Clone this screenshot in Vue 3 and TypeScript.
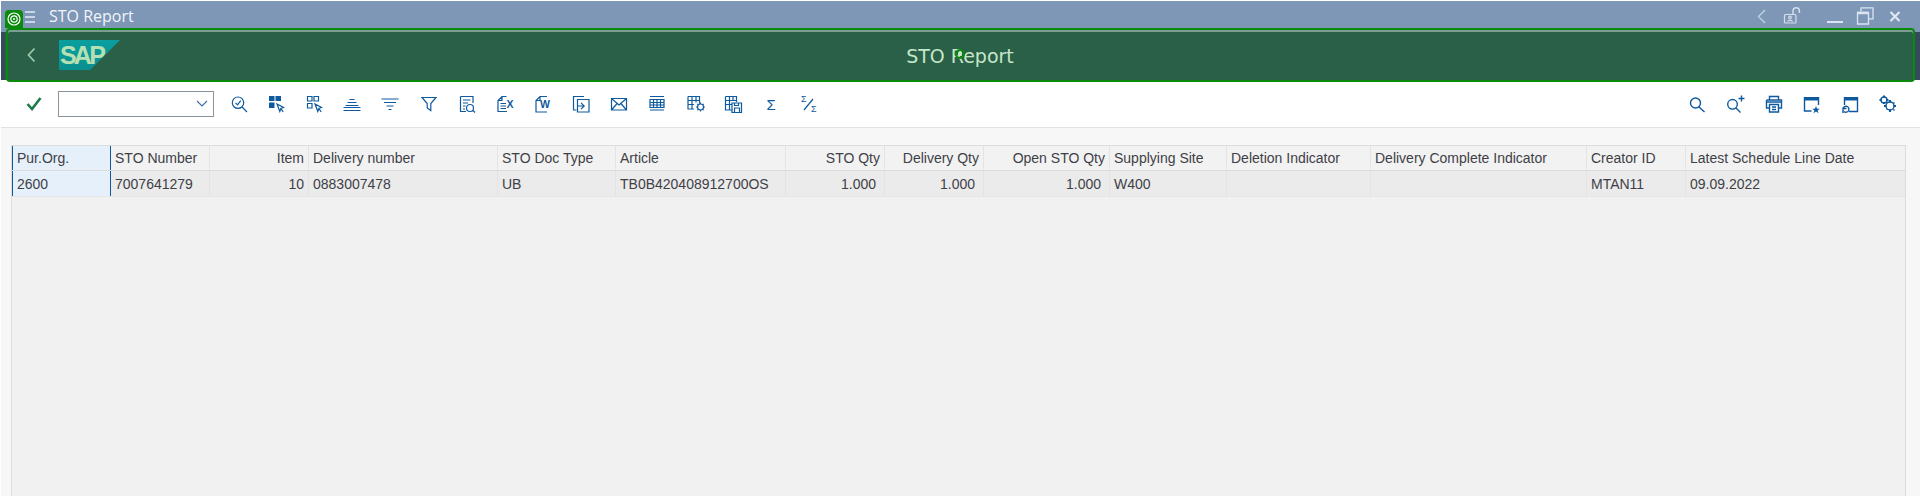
<template>
  <div class="app">
    <div class="title-bar">
      <svg class="menu-icon" width="10" height="12" viewBox="0 0 10 12">
        <path d="M0 1h10M0 6h10M0 11h10" stroke="#e3ebf5" stroke-width="1.5" />
      </svg>
      <span class="window-title">STO Report</span>
      <div class="window-btns">
        <svg width="30" height="24" viewBox="0 0 30 24" fill="none">
          <path d="M18 5l-6.500 6.500L18 18" stroke="#c3d2e4" stroke-width="1.300" />
        </svg>
        <svg width="30" height="24" viewBox="0 0 30 24" fill="none" stroke="#d3dfec" stroke-width="1.200">
          <rect x="7.500" y="9.500" width="11.500" height="8.500" rx="1" />
          <path d="M16 9.500V6a3.200 3.200 0 0 1 6.400 0v2" stroke-width="1.500" />
          <circle cx="13" cy="12.500" r="1.300" />
          <path d="M10.500 16.500c.5-1.600 4.500-1.600 5 0" />
        </svg>
        <svg class="gap-btn" width="30" height="24" viewBox="0 0 30 24" fill="none">
          <path d="M7 17h16" stroke="#dbe5f1" stroke-width="2" />
        </svg>
        <svg width="30" height="24" viewBox="0 0 30 24" fill="none" stroke="#dbe5f1" stroke-width="1.300">
          <path d="M7.500 7.500h11v11.500h-11z" />
          <path d="M11 6.500V2.800h12v11h-4" />
          <path d="M7.500 8h11" stroke-width="2.500" />
        </svg>
        <svg width="30" height="24" viewBox="0 0 30 24" fill="none">
          <path d="M10.500 7l9 9M19.500 7l-9 9" stroke="#e3ebf5" stroke-width="2" />
        </svg>
      </div>
    </div>

    <header class="shell-header">
      <div class="shell-inner">
        <svg class="back-icon" width="12" height="16" viewBox="0 0 12 16" fill="none">
          <path d="M8.500 1.500L2.500 8l6 6.500" stroke="#9fc7a5" stroke-width="1.800" />
        </svg>
        <div class="sap-logo"><span>SAP</span></div>
        <h1 class="page-title">STO Report</h1>
      </div>
      <div class="focus-frame"></div>
      <div class="focus-badge">
        <svg width="14" height="14" viewBox="0 0 14 14" fill="none" stroke="#fff">
          <circle cx="7" cy="7" r="6" stroke-width="1.200" />
          <circle cx="7" cy="7" r="3.200" stroke-width="1.200" />
          <circle cx="7" cy="7" r="1" fill="#fff" stroke="none" />
        </svg>
      </div>
      <div class="cursor-ring"></div>
    </header>

    <div class="toolbar">
      <svg class="ok-icon" width="18" height="16" viewBox="0 0 18 16" fill="none">
        <path d="M2.500 8l4.500 5L15.500 2" stroke="#1f7a4a" stroke-width="2.600" />
      </svg>
      <div class="command-box">
        <svg width="12" height="7" viewBox="0 0 12 7" fill="none">
          <path d="M1 1l5 5 5-5" stroke="#3a6ea5" stroke-width="1.100" />
        </svg>
      </div>
      <div class="tool-group">
        <button v-for="icon in leftIcons" :key="icon.name" class="tool-btn" :title="icon.name">
          <svg width="24" height="24" viewBox="0 0 24 24" fill="none">
            <path v-if="icon.solid" :d="icon.solid" fill="#0f5a9e" />
            <path v-if="icon.line" :d="icon.line" stroke="#0f5a9e" stroke-width="1.200" />
            <text v-for="t in icon.labels" :key="t.x" :x="t.x" :y="t.y" :font-size="t.size" :class="t.bold ? 'icon-label bold' : 'icon-label'">{{ t.text }}</text>
          </svg>
        </button>
      </div>
      <div class="tool-group right">
        <button v-for="icon in rightIcons" :key="icon.name" class="tool-btn" :title="icon.name">
          <svg width="24" height="24" viewBox="0 0 24 24" fill="none">
            <path v-if="icon.solid" :d="icon.solid" fill="#0f5a9e" />
            <path v-if="icon.line" :d="icon.line" stroke="#0f5a9e" stroke-width="1.400" />
          </svg>
        </button>
      </div>
    </div>

    <main class="content">
      <div class="table-panel">
        <div class="grid-row head">
          <div v-for="(col, i) in columns" :key="col.key" class="cell" :class="{ num: col.num, key: i === 0 }">
            {{ col.label }}
          </div>
        </div>
        <div v-for="row in rows" :key="row.ebeln" class="grid-row body">
          <div v-for="(col, i) in columns" :key="col.key" class="cell" :class="{ num: col.num, qty: col.qty, key: i === 0 }">
            {{ row[col.key] }}
          </div>
        </div>
      </div>
    </main>
  </div>
</template>

<script setup lang="ts">
interface Column {
  key: string
  label: string
  num?: boolean
  qty?: boolean
}

interface IconLabel {
  text: string
  x: number
  y: number
  size: number
  bold?: boolean
}

interface ToolIcon {
  name: string
  line?: string
  solid?: string
  labels?: IconLabel[]
}

const columns: Column[] = [
  { key: 'ekorg', label: 'Pur.Org.' },
  { key: 'ebeln', label: 'STO Number' },
  { key: 'ebelp', label: 'Item', num: true },
  { key: 'vbeln', label: 'Delivery number' },
  { key: 'bsart', label: 'STO Doc Type' },
  { key: 'matnr', label: 'Article' },
  { key: 'menge', label: 'STO Qty', num: true, qty: true },
  { key: 'lfimg', label: 'Delivery Qty', num: true, qty: true },
  { key: 'open', label: 'Open STO Qty', num: true, qty: true },
  { key: 'reswk', label: 'Supplying Site' },
  { key: 'loekz', label: 'Deletion Indicator' },
  { key: 'elikz', label: 'Delivery Complete Indicator' },
  { key: 'ernam', label: 'Creator ID' },
  { key: 'eindt', label: 'Latest Schedule Line Date' },
]

const rows: Record<string, string>[] = [
  {
    ekorg: '2600',
    ebeln: '7007641279',
    ebelp: '10',
    vbeln: '0883007478',
    bsart: 'UB',
    matnr: 'TB0B420408912700OS',
    menge: '1.000',
    lfimg: '1.000',
    open: '1.000',
    reswk: 'W400',
    loekz: '',
    elikz: '',
    ernam: 'MTAN11',
    eindt: '09.09.2022',
  },
]

const cursor = 'M13 12l6.500 3.500-2.700 1-1 3zM16.800 16.500l2.400 3.300'

const leftIcons: ToolIcon[] = [
  { name: 'Find check', line: 'M12 5a5.700 5.700 0 1 0 0 11.400a5.700 5.700 0 1 0 0-11.400M16 15l5 5M9.500 10.800l2 2 3.200-4.200' },
  { name: 'Select all', solid: 'M5 4h5.500v5H5zM11.500 4H17v5h-5.500zM5 10.500h5.500V16H5z', line: cursor },
  { name: 'Deselect all', line: 'M5.500 4.500H10v4.500H5.500zM12 4.500h4.500v4.500H12zM5.500 11.500H10V16H5.500z' + cursor },
  { name: 'Sort ascending', line: 'M9.500 7.500h5M7.500 10.500h9M5.500 13.500h13M3.500 15.500h17M3.500 18.500h17' },
  { name: 'Sort descending', line: 'M3.500 7h17M6 10.500h12M8.500 14h7M10.500 17.500h3' },
  { name: 'Filter', line: 'M5 5.500h14l-5.200 6v7l-3.600-2.500v-4.500z' },
  { name: 'Report', line: 'M5.500 4.500H18v6.500M5.500 4.500V19.500H11M8 8h7.500M8 11h5M8 14h2.500M8 17h2M15 12.500a3.500 3.500 0 1 0 0 7a3.500 3.500 0 1 0 0-7M17.500 18l2.500 2.500' },
  {
    name: 'Excel',
    line: 'M13.500 4.500H9L5 8.500V19.500h9M9 4.500V8.500H5M7.500 11.500H13M7.500 14H13M7.500 16.500H13',
    labels: [{ text: 'X', x: 13.500, y: 15.500, size: 10.500, bold: true }],
  },
  {
    name: 'Word',
    line: 'M16 4.500H9L5 8.500V20H16M9 4.500V8.500H5',
    labels: [{ text: 'W', x: 9, y: 16, size: 10.500, bold: true }],
  },
  { name: 'Export', line: 'M15 4.500H4.500V18H7.500M8.500 7.500H20V20H8.500zM8.500 14H15M12 10.800l3.200 3.200-3.200 3.200' },
  { name: 'Mail', line: 'M4.500 6.500h15v11.500h-15zM4.500 6.500l7.500 6.500 7.500-6.500M4.500 18l6-7M19.500 18l-6-7' },
  { name: 'Layout', line: 'M5 4.500h14M5 18h14M5 7.500h14v8H5zM5 10.500h14M5 13h14M8.500 7.500v8M12 7.500v8M15.500 7.500v8' },
  {
    name: 'Change layout',
    line: 'M5 4.500h11.500v7M5 4.500V17h6M5 8.500h11.500M5 12.500h6M9 4.500V17M13 4.500v6M17.500 12a3 3 0 1 0 0 6a3 3 0 1 0 0-6M17.500 10.500v1.500M17.500 18v1.500M14.500 15h-1.500M20.500 15h1.500M15.300 12.800l-1-1M19.700 17.200l1 1M19.700 12.800l1-1M15.300 17.200l-1 1',
  },
  {
    name: 'Save layout',
    line: 'M4.500 4.500h11v5.500M4.500 4.500V18h6M4.500 8.500h11M4.500 12.500h6M8.500 4.500V18M12 4.500v4M11 11h9.500v9.500H11zM13.500 20.500v-4.500h5v4.500M13.500 11v2.500h4V11',
  },
  { name: 'Sum', labels: [{ text: 'Σ', x: 7.500, y: 17.500, size: 15 }] },
  {
    name: 'Subtotal',
    line: 'M7 18L16 7',
    labels: [
      { text: 'Σ', x: 4, y: 10, size: 9 },
      { text: 'Σ', x: 14, y: 20, size: 9 },
    ],
  },
]

const rightIcons: ToolIcon[] = [
  { name: 'Find', line: 'M10.500 6a5 5 0 1 0 0 10a5 5 0 1 0 0-10M14 15l5.500 5' },
  { name: 'Find next', line: 'M8.500 7.500a4.800 4.800 0 1 0 0 9.600a4.800 4.800 0 1 0 0-9.600M12 16l4.500 4.500M17.500 3.500v6M14.500 6.500h6' },
  { name: 'Print', line: 'M7.500 8V4.500h9V8M4.500 8h15v8h-3M4.500 8v8h3M7.500 12.500h9V20h-9zM10 15h4M10 17.500h4M4.500 10h15' },
  {
    name: 'Favorite',
    solid: 'M4 5h15v3.500H4zM16 14l1.100 2.700h2.700l-2.200 1.700.9 2.800-2.500-1.700-2.500 1.700.9-2.800-2.200-1.700h2.700z',
    line: 'M4.500 5v14h7M18.500 5v8',
  },
  { name: 'Refresh', solid: 'M6 5h14v3.500H6z', line: 'M19.500 5V19.500H11M6.500 5v8M5 16.500a3 3 0 1 1 1 3M5 21v-4.500h3.500' },
  {
    name: 'Settings',
    solid: 'M7 3.500h2v2H7zM7 10h2v2H7zM3.500 7h2v2h-2zM10.500 7h2v2h-2zM13 8h2v2.500h-2zM13 17.500h2V20h-2zM8 13h2.500v2H8zM17.500 13H20v2h-2.500z',
    line: 'M8 5a3 3 0 1 0 0 6a3 3 0 1 0 0-6M14 10a4 4 0 1 0 0 8a4 4 0 1 0 0-8M10.500 10.500l1 1M17.500 17.500l1 1M18.500 10.500l-1 1M10.500 17.500l1-1',
  },
]
</script>

<style>
html,
body {
  margin: 0;
  background: #fff;
  overflow: hidden;
}
</style>

<style scoped>
.app {
  width: 1920px;
  height: 496px;
  display: flex;
  flex-direction: column;
  padding: 1px 0 0 1px;
  box-sizing: border-box;
  overflow: hidden;
  background: #fff;
  font-family: 'Liberation Sans', Arial, sans-serif;
}

.title-bar {
  height: 31px;
  flex: none;
  display: flex;
  align-items: flex-start;
  background: #7e97b7;
  color: #f2f5fa;
  padding: 0 10px 0 24px;
  box-sizing: border-box;
}

.menu-icon {
  margin-top: 10px;
}

.window-title {
  margin: 4px 0 0 14px;
  font-family: 'Open Sans', sans-serif;
  font-size: 16px;
  line-height: 22px;
}

.window-btns {
  margin: 4px 0 0 auto;
  display: flex;
}

.gap-btn {
  margin-left: 13px;
}

.shell-header {
  position: relative;
  height: 48px;
  flex: none;
  padding: 0 5px 0 4px;
  background: #354a5f;
}

.shell-inner {
  height: 100%;
  display: flex;
  align-items: center;
  position: relative;
  background: #2a5f48;
  box-sizing: border-box;
  padding: 0 0 2px 21px;
}

.back-icon {
  flex: none;
}

.sap-logo {
  width: 61px;
  height: 30px;
  margin-left: 21px;
  background: linear-gradient(#0a9f9f, #0b8f8f);
  clip-path: polygon(0 0, 100% 0, 51% 100%, 0 100%);
  display: flex;
  align-items: center;
  padding-left: 1px;
  box-sizing: border-box;
}

.sap-logo span {
  font-size: 25px;
  font-weight: 700;
  letter-spacing: -2.800px;
  color: #b6e0b4;
}

.page-title {
  position: absolute;
  left: 0;
  right: 0;
  top: 0;
  margin: 0;
  line-height: 48px;
  text-align: center;
  font-family: 'DejaVu Sans', sans-serif;
  font-size: 19px;
  font-weight: 400;
  color: #c6e6c8;
  pointer-events: none;
}

.focus-frame {
  position: absolute;
  left: 5px;
  right: 5px;
  top: -4px;
  bottom: -2px;
  border: 2px solid #0a8a0a;
  border-radius: 4px;
  box-shadow: inset 0 2px 0 #7d9c92;
  box-sizing: border-box;
  pointer-events: none;
}

.focus-badge {
  position: absolute;
  left: 4px;
  top: -22px;
  width: 18px;
  height: 18px;
  background: #0a8a0a;
  border-radius: 4px 4px 0 0;
  display: flex;
  align-items: center;
  justify-content: center;
}

.cursor-ring {
  position: absolute;
  left: 954px;
  top: 17px;
  width: 6px;
  height: 6px;
  border: 2px solid #0a8a0a;
  border-radius: 50%;
  background: radial-gradient(#c6e6c8 2px, transparent 2.500px);
}

.toolbar {
  height: 48px;
  flex: none;
  display: flex;
  align-items: center;
  padding: 0 13px 0 24px;
  box-sizing: border-box;
  background: #fff;
  border-bottom: 1px solid #e2e2e2;
}

.ok-icon {
  flex: none;
}

.command-box {
  width: 156px;
  height: 26px;
  margin-left: 15px;
  box-sizing: border-box;
  border: 1px solid #89919a;
  display: flex;
  align-items: center;
  justify-content: flex-end;
  padding-right: 5px;
}

.tool-group {
  display: flex;
  margin-left: 5px;
}

.tool-group.right {
  margin-left: auto;
}

.tool-btn {
  width: 38.100px;
  height: 36px;
  padding: 0;
  border: none;
  background: none;
  display: flex;
  align-items: center;
  justify-content: center;
}

.icon-label {
  fill: #0f5a9e;
  font-family: 'Liberation Sans', sans-serif;
}

.icon-label.bold {
  font-weight: 700;
}

.content {
  flex: 1;
  min-height: 0;
  display: flex;
  padding: 17px 14px 0 10px;
  background: #f7f7f7;
}

.table-panel {
  flex: 1;
  background: #f1f1f1;
  border: 1px solid #dcdcdc;
  border-width: 1px 1px 0 1px;
  font-size: 14px;
  color: #3f3f47;
}

.grid-row {
  display: grid;
  grid-template-columns: 99px 99px 99px 189px 118px 170px 99px 99px 126px 117px 144px 216px 99px 218px;
  border-bottom: 1px solid #dcdcdc;
  box-sizing: border-box;
}

.grid-row.head {
  height: 25px;
  background: #f2f2f2;
}

.grid-row.body {
  height: 26px;
  background: #ebebeb;
  border-bottom-color: #e4e4e4;
}

.cell {
  display: flex;
  align-items: center;
  padding: 0 4px;
  box-sizing: border-box;
  border-right: 1px solid #e4e4e4;
  white-space: nowrap;
}

.cell:last-child {
  border-right: none;
}

.cell.num {
  justify-content: flex-end;
}

.cell.qty {
  padding-right: 8px;
}

.cell.key {
  background: #e5f0fa;
  border-left: 1px solid #0f5a9e;
  border-right: 1px solid #0f5a9e;
}
</style>
